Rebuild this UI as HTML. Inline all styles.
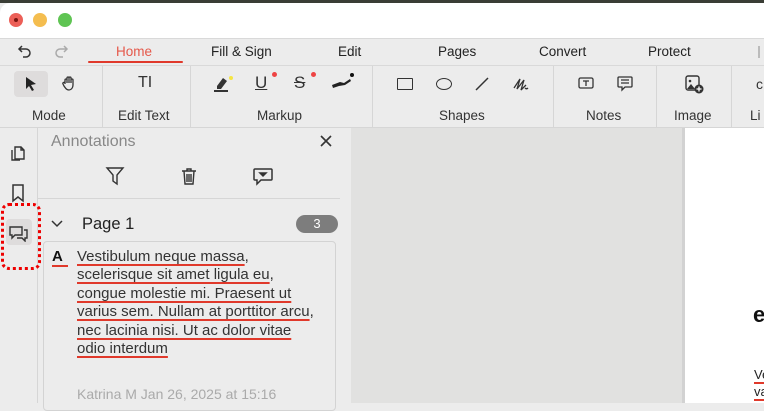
<!DOCTYPE html>
<html><head><style>
*{margin:0;padding:0;box-sizing:border-box}
body{width:764px;height:403px;overflow:hidden;background:#ececec;font-family:"Liberation Sans",sans-serif;position:relative;color:#222}
.a{position:absolute}
.lbl{position:absolute;font-size:13.5px;color:#333;top:108px}
.tab{position:absolute;top:44px;font-size:13.5px;color:#222}
.vs{position:absolute;top:66px;width:1px;height:61px;background:#d6d6d6}
.u{text-decoration:underline;text-decoration-color:#e0392b;text-decoration-thickness:2px;text-underline-offset:3px}
</style></head><body>
<div class="a" style="left:0;top:0;width:764px;height:3px;background:#3a3d35"></div>
<div class="a" style="left:0;top:3px;width:764px;height:35px;background:#fff;border-radius:10px 0 0 0"></div>
<div class="a" style="left:9px;top:13px;width:14px;height:14px;border-radius:50%;background:#ec5f57"><div style="margin:5px;width:4px;height:4px;border-radius:50%;background:#7a1510"></div></div>
<div class="a" style="left:33px;top:13px;width:14px;height:14px;border-radius:50%;background:#f4bd4f"></div>
<div class="a" style="left:58px;top:13px;width:14px;height:14px;border-radius:50%;background:#5fc453"></div>
<div class="a" style="left:0;top:38px;width:764px;height:1px;background:#d9d9d9"></div>
<div class="a" style="left:0;top:65px;width:764px;height:1px;background:#d9d9d9"></div>
<div class="a" style="left:0;top:127px;width:764px;height:1px;background:#d6d6d6"></div>
<svg class="a" style="left:17px;top:44px" width="16" height="14" viewBox="0 0 16 14" fill="none" stroke="#333" stroke-width="1.5"><path d="M5 2L2 5l3 3M2 5h7a4 4 0 010 8H6"/></svg>
<svg class="a" style="left:53px;top:44px" width="16" height="14" viewBox="0 0 16 14" fill="none" stroke="#aaa" stroke-width="1.5"><path d="M11 2l3 3-3 3M14 5H7a4 4 0 000 8h3"/></svg>
<div class="tab" style="left:116px;color:#e5584a">Home</div>
<div class="a" style="left:88px;top:61px;width:95px;height:2px;background:#e0392b;border-radius:1px"></div>
<div class="tab" style="left:211px">Fill &amp; Sign</div>
<div class="tab" style="left:338px">Edit</div>
<div class="tab" style="left:438px">Pages</div>
<div class="tab" style="left:539px">Convert</div>
<div class="tab" style="left:648px">Protect</div>
<div class="a" style="left:758px;top:46px;width:2px;height:12px;background:#bbb"></div>
<div class="vs" style="left:102px"></div><div class="vs" style="left:190px"></div><div class="vs" style="left:372px"></div><div class="vs" style="left:553px"></div><div class="vs" style="left:656px"></div><div class="vs" style="left:731px"></div>
<div class="a" style="left:14px;top:71px;width:34px;height:26px;background:#dedcdc;border-radius:4px"></div>
<svg class="a" style="left:24px;top:76px" width="14" height="16" viewBox="0 0 14 16"><path d="M2 1l10 7-5 1 3 5-2 1-3-5-3 3z" fill="#222"/></svg>
<svg class="a" style="left:62px;top:75px" width="14" height="16" viewBox="0 0 14 16" fill="none" stroke="#333" stroke-width="1.3"><path d="M3 9V5a1 1 0 012 0v3V3a1 1 0 012 0v5V3a1 1 0 012 0v5V5a1 1 0 012 0v5c0 3-2 5-4 5s-3-1-5-4l-1-2a1 1 0 012-1z"/></svg>
<div class="a" style="left:138px;top:74px;font-size:16px;color:#333">T<span style="font-weight:300">I</span></div>
<svg class="a" style="left:212px;top:74px" width="22" height="20"><path d="M5 12l6-8 4 3-6 8H5z" fill="#333"/><rect x="2" y="16" width="14" height="2" fill="#333"/><circle cx="19" cy="4" r="2" fill="#f5e542"/></svg>
<div class="a" style="left:255px;top:73px;font-size:17px;text-decoration:underline;color:#333">U</div><div class="a" style="left:272px;top:72px;width:5px;height:5px;border-radius:50%;background:#e44"></div>
<div class="a" style="left:294px;top:73px;font-size:17px;text-decoration:line-through;color:#333">S</div><div class="a" style="left:311px;top:72px;width:5px;height:5px;border-radius:50%;background:#e44"></div>
<svg class="a" style="left:330px;top:71px" width="26" height="20"><path d="M2 14l8-3 4 1 6-4 1 2-6 4-6 1-6 2z" fill="#222"/><circle cx="22" cy="4" r="2" fill="#111"/></svg>
<div class="a" style="left:397px;top:78px;width:16px;height:12px;border:1.5px solid #333;border-radius:1px"></div>
<div class="a" style="left:436px;top:78px;width:16px;height:12px;border:1.5px solid #333;border-radius:50%"></div>
<svg class="a" style="left:474px;top:76px" width="16" height="16"><path d="M2 14L14 2" stroke="#333" stroke-width="1.5"/></svg>
<svg class="a" style="left:512px;top:76px" width="18" height="16" fill="none" stroke="#333" stroke-width="1.3"><path d="M2 12l6-9-3 10 7-9-3 10 5-5M13 12c1 1 2 1 3 0"/></svg>
<svg class="a" style="left:577px;top:76px" width="18" height="14" fill="none" stroke="#333" stroke-width="1.3"><rect x="2" y="2" width="14" height="10" rx="1.5"/><path d="M6 5h6M9 5v5"/></svg>
<svg class="a" style="left:616px;top:75px" width="18" height="18" fill="none" stroke="#333" stroke-width="1.3"><path d="M3 2h12a1 1 0 011 1v8a1 1 0 01-1 1H9l-3 3v-3H3a1 1 0 01-1-1V3a1 1 0 011-1zM5 5h8M5 8h8"/></svg>
<svg class="a" style="left:684px;top:74px" width="20" height="20"><rect x="2" y="2" width="13" height="14" rx="2" fill="none" stroke="#333" stroke-width="1.4"/><path d="M3 15l4-5 4 5z" fill="#333"/><circle cx="6" cy="7" r="1.3" fill="#333"/><circle cx="15" cy="15" r="4.5" fill="#333"/><path d="M15 12.5v5M12.5 15h5" stroke="#fff" stroke-width="1.3"/></svg>
<div class="a" style="left:756px;top:76px;font-size:14px;color:#333">c</div>
<div class="lbl" style="left:32px">Mode</div>
<div class="lbl" style="left:118px">Edit Text</div>
<div class="lbl" style="left:257px">Markup</div>
<div class="lbl" style="left:439px">Shapes</div>
<div class="lbl" style="left:586px">Notes</div>
<div class="lbl" style="left:674px">Image</div>
<div class="lbl" style="left:750px">Li</div>
<div class="a" style="left:37px;top:128px;width:1px;height:275px;background:#d6d6d6"></div>
<svg class="a" style="left:9px;top:143px" width="18" height="20" fill="none" stroke="#333" stroke-width="1.4"><path d="M6 4h6l3 3v9H6zM3 7v10h8M12 4v3h3"/></svg>
<svg class="a" style="left:10px;top:183px" width="16" height="20" fill="none" stroke="#333" stroke-width="1.5"><path d="M3 2h10v16l-5-4-5 4z"/></svg>
<div class="a" style="left:6px;top:219px;width:26px;height:26px;background:#dedcdc;border-radius:4px"></div>
<svg class="a" style="left:8px;top:224px" width="22" height="18" fill="none" stroke="#333" stroke-width="1.4"><path d="M2 3h12v8H7l-3 3v-3H2zM16 6h3v8h-2v3l-3-3H9"/></svg>
<div class="a" style="left:1px;top:203px;width:40px;height:67px;border:3px dotted #e00;border-radius:8px"></div>
<div class="a" style="left:51px;top:133px;font-size:16px;color:#888">Annotations</div>
<svg class="a" style="left:320px;top:135px" width="12" height="12" stroke="#333" stroke-width="1.6"><path d="M1 1l10 10M11 1L1 11"/></svg>
<svg class="a" style="left:105px;top:166px" width="20" height="20" fill="none" stroke="#333" stroke-width="1.4"><path d="M2 2h16l-6 7v9l-4-3V9z"/></svg>
<svg class="a" style="left:180px;top:167px" width="18" height="19" fill="none" stroke="#333" stroke-width="1.4"><path d="M2 4h14M7 4V2h4v2M4 4l1 13h8l1-13M7 7v8M9 7v8M11 7v8"/></svg>
<svg class="a" style="left:252px;top:167px" width="22" height="20" fill="none" stroke="#333" stroke-width="1.5"><path d="M3 2h16a1 1 0 011 1v9a1 1 0 01-1 1H9l-4 4v-4H3a1 1 0 01-1-1V3a1 1 0 011-1z"/><path d="M8 6h6l-3 3z" fill="#333"/></svg>
<div class="a" style="left:38px;top:198px;width:302px;height:1px;background:#d6d6d6"></div>
<svg class="a" style="left:50px;top:219px" width="14" height="10" fill="none" stroke="#333" stroke-width="1.5"><path d="M2 2l5 5 5-5"/></svg>
<div class="a" style="left:82px;top:215px;font-size:16.5px;color:#222">Page 1</div>
<div class="a" style="left:296px;top:215px;width:42px;height:18px;border-radius:9px;background:#7d7d7d;color:#fff;font-size:13px;text-align:center;line-height:18px">3</div>
<div class="a" style="left:43px;top:241px;width:293px;height:170px;border:1px solid #d3d3d3;border-radius:4px"></div>
<div class="a" style="left:52px;top:248px;font-size:15px;font-weight:bold;color:#111;border-bottom:2px solid #e0392b;line-height:17px;width:16px">A</div>
<div class="a" style="left:77px;top:248px;font-size:15px;line-height:18.4px;color:#333;width:270px">
<span class="u">Vestibulum neque massa</span>,<br><span class="u">scelerisque sit amet ligula eu</span>,<br><span class="u">congue molestie mi. Praesent ut</span><br><span class="u">varius sem. Nullam at porttitor arcu</span>,<br><span class="u">nec lacinia nisi. Ut ac dolor vitae</span><br><span class="u">odio interdum</span></div>
<div class="a" style="left:77px;top:386px;font-size:14px;color:#aaa">Katrina M Jan 26, 2025 at 15:16</div>
<div class="a" style="left:351px;top:128px;width:334px;height:275px;background:#e1e1e0"></div>
<div class="a" style="left:682px;top:128px;width:3px;height:275px;background:#d2d2d2"></div>
<div class="a" style="left:685px;top:128px;width:79px;height:275px;background:#fff"></div>
<div class="a" style="left:753px;top:302px;font-size:22px;font-weight:bold;color:#111">e</div>
<div class="a" style="left:754px;top:366px;font-size:13px;color:#222;line-height:17px"><span class="u">Ve</span><br><span class="u">va</span></div>
</body></html>
